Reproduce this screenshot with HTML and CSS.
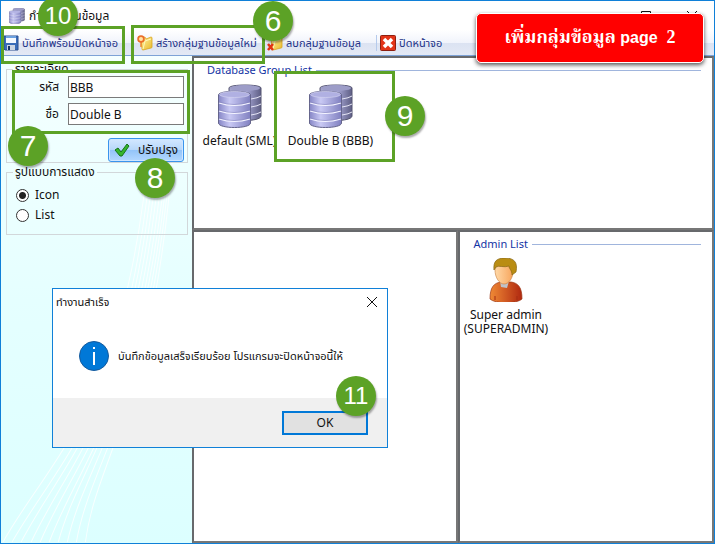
FILE: index.html
```html
<!DOCTYPE html>
<html lang="th">
<head>
<meta charset="utf-8">
<title>กำหนดฐานข้อมูล</title>
<link rel="stylesheet" href="styles.css">
</head>
<body>
<svg class="defs" aria-hidden="true">
  <defs>
    <linearGradient id="drum" x1="0" x2="1"><stop offset="0" stop-color="#8686c6"/><stop offset=".35" stop-color="#c9c9f4"/><stop offset="1" stop-color="#8080c0"/></linearGradient>
    <linearGradient id="drumBack" x1="0" x2="1"><stop offset="0" stop-color="#a5a5cb"/><stop offset=".5" stop-color="#adaddc"/><stop offset="1" stop-color="#5e5e84"/></linearGradient>
    <linearGradient id="skin" x1="0" x2="1"><stop offset="0" stop-color="#ffd9a8"/><stop offset="1" stop-color="#f7a55c"/></linearGradient>
    <linearGradient id="shirt" x1="0" x2="1"><stop offset="0" stop-color="#f08a35"/><stop offset="1" stop-color="#b02810"/></linearGradient>
    <linearGradient id="gold" x1="0" y1="0" x2="1" y2="1"><stop offset="0" stop-color="#fff6a8"/><stop offset="1" stop-color="#e9b826"/></linearGradient>
    <symbol id="database" viewBox="0 0 44 44">
      <path d="M11 4C11 0 43 0 43 4V32C43 38 11 38 11 32Z" fill="url(#drumBack)" stroke="#555570"/>
      <ellipse cx="27" cy="4" rx="15" ry="3" fill="#9d9dc8"/>
      <path d="M33 15Q40 14 43 12M33 23Q40 22 43 20M33 31Q40 30 43 28" fill="none" stroke="#e5e5f5"/>
      <path d="M.5 11C.5 6 32.500 6 32.500 11V39C32.500 45 .5 45 .5 39Z" fill="url(#drum)" stroke="#65658c"/>
      <ellipse cx="16.500" cy="10.500" rx="15" ry="3" fill="#b0b0e2" stroke="#d9d9f2" stroke-width=".6"/>
      <path d="M1 19Q16 24 32 19M1 27Q16 32 32 27M1 35Q16 40 32 35" fill="none" stroke="#f4f4ff" stroke-width="1.200"/>
      <path d="M1 18Q16 23 32 18M1 26Q16 31 32 26M1 34Q16 39 32 34" fill="none" stroke="#8080b8" stroke-width=".5"/>
    </symbol>
    <symbol id="folder" viewBox="0 0 16 16">
      <path d="M4 3L8 2l1 2 5-2q1 0 1 1v9q0 1-1 1l-8 2q-1 0-1-1Z" fill="url(#gold)" stroke="#d9a520" stroke-width=".8"/>
      <path d="M6 14L8 6l6-2" fill="none" stroke="#fff8ba"/>
    </symbol>
  </defs>
</svg>

<div class="window">
  <header class="titlebar">
    <svg class="icon16" aria-hidden="true"><use href="#database"/></svg>
    <h1>กำหนดฐานข้อมูล</h1>
    <div class="window-buttons">
      <button aria-label="Maximize"><svg viewBox="0 0 12 12"><path d="M1.500 1.500h9v9h-9Z"/></svg></button>
      <button aria-label="Close"><svg viewBox="0 0 12 12"><path d="M1 1l10 10M11 1L1 11"/></svg></button>
    </div>
  </header>

  <nav class="toolbar">
    <button class="tool tool-save">
      <svg class="icon16" viewBox="0 0 16 16" aria-hidden="true"><path d="M1 1h14v14H2l-1-1Z" fill="#3a6cb8" stroke="#2a4f8e"/><path d="M3 1h10v7H3Z" fill="#f4f8ff"/><path d="M3 1h10v2H3Z" fill="#6ba0df"/><path d="M4 10h8v5H4Z" fill="#ccd5e3"/><path d="M5 11h2v4H5Z" fill="#163568"/></svg>
      <span>บันทึกพร้อมปิดหน้าจอ</span>
    </button>
    <button class="tool tool-new">
      <svg class="icon16" viewBox="0 0 16 16" aria-hidden="true"><use href="#folder"/><path d="M4 4v8" stroke="#f08a2c" stroke-width="1.500"/><circle cx="4" cy="4" r="3" fill="#ffb45c" stroke="#ea6a28" stroke-width="1.500"/><path d="M4 2v4M2 4h4" stroke="#fff0c0"/></svg>
      <span>สร้างกลุ่มฐานข้อมูลใหม่</span>
    </button>
    <button class="tool tool-delete">
      <svg class="icon16" viewBox="0 0 16 16" aria-hidden="true"><use href="#folder"/><path d="M1 9l5 6M6 9l-5 6" stroke="#e33414" stroke-width="2.500"/></svg>
      <span>ลบกลุ่มฐานข้อมูล</span>
    </button>
    <button class="tool tool-close">
      <svg class="icon16" viewBox="0 0 16 16" aria-hidden="true"><rect x=".5" y=".5" width="15" height="15" rx="1" fill="#e33418" stroke="#8e1f10"/><path d="M4 4l8 8M12 4l-8 8" stroke="#fff" stroke-width="3.500"/></svg>
      <span>ปิดหน้าจอ</span>
    </button>
  </nav>

  <div class="workspace">
    <aside class="sidebar">
      <svg class="swoosh" viewBox="0 0 190 487" preserveAspectRatio="none" aria-hidden="true">
        <path d="M2 486C50 400 125 350 148 85M11 486C60 400 129 350 151 85M20 486C65 400 132 350 154 85M30 486C70 400 135 350 157 85M39 486C75 400 138 350 160 85M48 486C80 400 141 350 163 85M57 486C80 400 144 350 166 85M66 486C85 400 147 350 168 85M75 486C90 400 150 350 170 85M84 486C95 400 153 350 172 85"/>
      </svg>
      <fieldset class="group details">
        <legend>รายละเอียด</legend>
        <div class="field"><label for="code">รหัส</label><input id="code" type="text" value="BBB"></div>
        <div class="field"><label for="name">ชื่อ</label><input id="name" type="text" value="Double B"></div>
        <button class="update">
          <svg class="icon16" viewBox="0 0 16 16" aria-hidden="true"><path d="M1 8l3-2 3 4 6-8 2 2-7 10H6Z" fill="#35b52c" stroke="#16731b"/></svg>
          <span>ปรับปรุง</span>
        </button>
      </fieldset>
      <fieldset class="group display">
        <legend>รูปแบบการแสดง</legend>
        <label><input type="radio" name="view" checked>Icon</label>
        <label><input type="radio" name="view">List</label>
      </fieldset>
    </aside>

    <main class="panels">
      <section class="panel panel-groups">
        <h2>Database Group List</h2>
        <ul class="items">
          <li><svg class="icon44" aria-hidden="true"><use href="#database"/></svg><span>default (SML)</span></li>
          <li><svg class="icon44" aria-hidden="true"><use href="#database"/></svg><span>Double B (BBB)</span></li>
        </ul>
      </section>
      <section class="panel"></section>
      <section class="panel panel-admins">
        <h2>Admin List</h2>
        <ul class="items">
          <li>
            <svg class="icon44" viewBox="0 0 44 44" aria-hidden="true"><path d="M6 41C6 29 10 25 17 24h10c7 1 11 5 11 17-5 5-27 5-32 0Z" fill="url(#shirt)" stroke="#9b3413" stroke-width=".7"/><path d="M16 23h9l-2 7-6-1Z" fill="#bfc2c8"/><path d="M11 12C11 3 29 3 29 13c0 7-4 13-9 13s-9-7-9-14Z" fill="url(#skin)" stroke="#c77a38" stroke-width=".6"/><path d="M10 12C9 3 13 0 21 0c9 0 13 4 11 14l-4 3c0-5-3-6-3-9-5 2-10-1-13 1Z" fill="#b98d13" stroke="#886716" stroke-width=".7"/><path d="M11 38v4M33 38v4" stroke="#a52c12"/></svg>
            <span>Super admin<br>(SUPERADMIN)</span>
          </li>
        </ul>
      </section>
    </main>
  </div>
</div>

<div class="dialog" role="dialog" aria-labelledby="dialog-title">
  <div class="dialog-head">
    <h2 id="dialog-title">ทำงานสำเร็จ</h2>
    <button aria-label="Close"><svg viewBox="0 0 12 12"><path d="M1 1l10 10M11 1L1 11"/></svg></button>
  </div>
  <div class="dialog-body">
    <svg class="info" viewBox="0 0 30 30" aria-hidden="true"><circle cx="15" cy="15" r="14.500" fill="#0078d7" stroke="#155a9c"/><path d="M15 11v13M15 6v2" stroke="#fff" stroke-width="2"/></svg>
    <p>บันทึกข้อมูลเสร็จเรียบร้อย โปรแกรมจะปิดหน้าจอนี้ให้</p>
  </div>
  <div class="dialog-foot"><button>OK</button></div>
</div>

<div class="outline outline-save"></div>
<div class="outline outline-new"></div>
<div class="outline outline-fields"></div>
<div class="outline outline-item"></div>
<span class="badge badge-6">6</span>
<span class="badge badge-7">7</span>
<span class="badge badge-8">8</span>
<span class="badge badge-9">9</span>
<span class="badge badge-10">10</span>
<span class="badge badge-11">11</span>
<div class="banner">เพิ่มกลุ่มข้อมูล <b>page</b>&nbsp; 2</div>
</body>
</html>
```

FILE: styles.css
```css
* { box-sizing: border-box; }

body {
  position: relative;
  margin: 0;
  min-height: 100vh;
  display: flex;
  font: 12px/14px "Noto Sans", "Noto Sans Thai", "Liberation Sans", sans-serif;
  color: #111;
  background: #fff;
  overflow: hidden;
  white-space: nowrap;
}

h1, h2, p, ul { margin: 0; padding: 0; font: inherit; }
ul { list-style: none; }
button, input { font: inherit; color: inherit; }
.defs { position: absolute; width: 0; height: 0; }
.icon16 { flex: none; width: 16px; height: 16px; }
.icon44 { flex: none; width: 44px; height: 44px; }

.window {
  flex: 1;
  display: flex;
  flex-direction: column;
  border: 1px solid #1080d8;
}

.titlebar {
  display: flex;
  align-items: center;
  gap: 4px;
  height: 29px;
  padding: 0 16px 0 8px;
}
.window-buttons { display: flex; gap: 34px; margin-left: auto; }
.window-buttons button, .dialog-head button {
  width: 12px;
  height: 12px;
  padding: 0;
  border: 0;
  background: none;
}
.window-buttons svg, .dialog-head svg { display: block; fill: none; stroke: #111; }

.toolbar {
  display: flex;
  align-items: center;
  height: 26px;
  padding: 0 2px;
  background: linear-gradient(#fff, #f0f3fb 53%, #dce3f2 54%, #e3e9f5);
  border-bottom: 1px solid #7da2d6;
}
.tool {
  display: flex;
  align-items: center;
  gap: 3px;
  height: 24px;
  padding: 0;
  border: 0;
  background: none;
  color: #1e3287;
  font-size: 11px;
}
.tool-save { width: 134px; }
.tool-new { width: 130px; }
.tool-delete { width: 109px; }
.tool-close { padding-left: 3px; border-left: 1px solid #b5caeb; height: 16px; }

.workspace { flex: 1; display: flex; }
.sidebar {
  position: relative;
  flex: 0 0 191px;
  display: flex;
  flex-direction: column;
  gap: 2px;
  padding: 6px 4px 0 5px;
  background: linear-gradient(#f5ffff, #e5ffff 50%, #dcffff);
}
.swoosh { position: absolute; left: 0; top: 0; width: 100%; height: 100%; }
.swoosh path { fill: none; stroke: #fff; stroke-width: 1; opacity: .8; }
.group {
  position: relative;
  display: flex;
  flex-direction: column;
  min-width: 0;
  margin: 0;
  padding: 0 3px;
  border: 1px solid #d2d7da;
}
.group legend { margin-left: 3px; padding: 0 2px; height: 14px; }
.details { gap: 5px; height: 101px; }
.field { display: flex; align-items: center; gap: 9px; }
.field label { flex: 1; text-align: right; }
.field input {
  width: 116px;
  height: 22px;
  padding: 0 1px;
  border: 1px solid #7a7a7a;
  background: #fff;
}
.update {
  display: flex;
  align-items: center;
  justify-content: center;
  gap: 8px;
  align-self: flex-end;
  width: 76px;
  height: 24px;
  margin-top: 8px;
  padding: 0;
  border: 1px solid #3994ed;
  border-radius: 3px;
  box-shadow: inset 0 0 0 1px #cfe6ff;
  background: linear-gradient(#d3e8ff, #b7d7fa 50%, #93c4f8 51%, #b3d8ff);
}
.display { gap: 6px; height: 70px; padding-top: 9px; }
.display label { display: flex; align-items: center; gap: 6px; padding-left: 6px; }
.display input {
  appearance: none;
  width: 13px;
  height: 13px;
  margin: 0;
  border: 1px solid #333;
  border-radius: 50%;
  background: #fff;
}
.display input:checked { background: radial-gradient(circle, #222 0 3px, #fff 4px); }

.panels {
  flex: 1;
  display: grid;
  grid-template-columns: 267fr 256fr;
  grid-template-rows: 174px 1fr;
}
.panel { min-width: 0; padding: 5px 11px 0 13px; border: 2px solid #67696c; border-right-color: #777; border-bottom-color: #777; }
.panel-groups { grid-column: 1 / -1; }
.panel h2 { display: flex; align-items: center; gap: 4px; font-size: 11px; color: #1434a4; }
.panel h2::after { content: ""; flex: 1; height: 1px; background: #a0b5dd; }
.items { display: flex; }
.items li {
  display: flex;
  flex-direction: column;
  align-items: center;
  gap: 6px;
  width: 91px;
  padding-top: 7px;
  text-align: center;
}
.items { margin-left: -13px; }

.dialog {
  position: absolute;
  left: 52px;
  top: 288px;
  width: 336px;
  height: 160px;
  display: flex;
  flex-direction: column;
  border: 1px solid #1080d8;
  background: #fff;
}
.dialog-head { display: flex; justify-content: space-between; align-items: center; height: 25px; padding: 0 9px 0 3px; font-size: 11px; }
.dialog-body { flex: 1; display: flex; align-items: center; gap: 9px; padding: 0 26px; font-size: 11px; }
.info { flex: none; width: 30px; height: 30px; }
.dialog-foot {
  display: flex;
  align-items: center;
  justify-content: flex-end;
  height: 49px;
  padding: 0 19px;
  background: #f0f0f0;
}
.dialog-foot button { width: 86px; height: 24px; padding: 0; border: 2px solid #0078d7; background: #e1e1e1; }

.outline { position: absolute; border: 3px solid #5ca226; }
.outline-save { left: 1px; top: 26px; width: 124px; height: 38px; }
.outline-new { left: 131px; top: 25px; width: 134px; height: 39px; }
.outline-fields { left: 12px; top: 70px; width: 178px; height: 64px; }
.outline-item { left: 274px; top: 71px; width: 121px; height: 91px; }
.badge {
  position: absolute;
  width: 40px;
  height: 40px;
  border-radius: 50%;
  background: #5ca226;
  box-shadow: 1px 2px 2px #0005;
  color: #fff;
  font: 30px/40px "Liberation Sans", sans-serif;
  text-align: center;
}
.badge-6 { left: 253px; top: 1px; }
.badge-7 { left: 8px; top: 126px; }
.badge-8 { left: 135px; top: 158px; }
.badge-9 { left: 385px; top: 96px; }
.badge-10, .badge-11 { font-size: 24px; }
.badge-10 { left: 38px; top: -4px; }
.badge-11 { left: 336px; top: 376px; }
.banner {
  position: absolute;
  left: 476px;
  top: 13px;
  width: 228px;
  height: 50px;
  border: 1px solid #fff;
  border-radius: 5px;
  background: #f00;
  box-shadow: 0 2px 4px #000a;
  color: #fff;
  font: bold 18px/46px "Liberation Serif", "Noto Serif Thai", serif;
  text-align: center;
}
.banner b { font: bold 16px/46px "Liberation Sans", sans-serif; }
```
